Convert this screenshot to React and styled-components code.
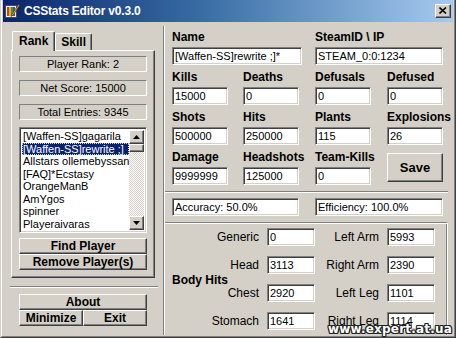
import React from 'react'
import styled, { createGlobalStyle, css } from 'styled-components'

const GlobalStyle = createGlobalStyle`
  html, body {
    margin: 0;
    padding: 0;
    background: #fff;
  }
  body {
    font-family: "Liberation Sans", Arial, sans-serif;
    font-size: 11px;
    color: #000;
  }
  * {
    box-sizing: border-box;
  }
`

// classic win2000 bevels
const raised = css`
  border: 1px solid;
  border-color: #fff #404040 #404040 #fff;
  box-shadow: inset -1px -1px #808080, inset 1px 1px #d4d0c8;
`

const sunken = css`
  border: 1px solid;
  border-color: #808080 #fff #fff #808080;
  box-shadow: inset 1px 1px #404040, inset -1px -1px #d4d0c8;
`

const Window = styled.div`
  position: relative;
  width: 456px;
  height: 338px;
  background: #d4d0c8;
  border: 1px solid;
  border-top: 0;
  border-color: #d4d0c8 #404040 #404040 #d4d0c8;
  display: flex;
  overflow: hidden;
`

const Frame = styled.div`
  flex: 1;
  display: flex;
  flex-direction: column;
  border: 1px solid;
  border-top: 0;
  border-color: #fff #808080 #808080 #fff;
  padding: 0 1px 1px 1px;
`

const TitleBar = styled.div`
  height: 22px;
  flex: none;
  display: flex;
  align-items: center;
  padding: 0 2px 1px 1px;
  background: linear-gradient(90deg, #0a246a 0%, #3a6ea5 45%, #a6caf0 100%);

  .title {
    margin-left: 4px;
    color: #fff;
    font-weight: bold;
    font-size: 12px;
    letter-spacing: -0.2px;
  }
`

const CloseButton = styled.div`
  ${raised};
  margin-left: auto;
  width: 16px;
  height: 14px;
  background: #d4d0c8;
  display: flex;
  align-items: center;
  justify-content: center;
`

const Body = styled.div`
  flex: 1;
  display: flex;
`

const LeftPane = styled.div`
  width: 160px;
  flex: none;
  padding: 9px 0 0 8px;
  display: flex;
  flex-direction: column;
`

const Divider = styled.div`
  width: 2px;
  flex: none;
  margin-top: 4px;
  border-left: 1px solid #808080;
  border-right: 1px solid #fff;
`

const TabStrip = styled.div`
  height: 19px;
  display: flex;
  align-items: flex-end;
  padding-left: 1px;
`

const Tab = styled.div`
  position: relative;
  z-index: ${p => (p.$active ? 1 : 0)};
  height: ${p => (p.$active ? '20px' : '17px')};
  margin-bottom: ${p => (p.$active ? '-1px' : '0')};
  padding: ${p => (p.$active ? '2px 6px 0 6px' : '1px 5px 0 5px')};
  background: #d4d0c8;
  border-top: 1px solid #fff;
  border-left: 1px solid #fff;
  border-right: 1px solid #404040;
  box-shadow: inset -1px 0 #808080;
  border-radius: 2px 2px 0 0;
  font-weight: bold;
  font-size: 12px;
  line-height: 14px;
`

const TabPanel = styled.div`
  width: 144px;
  height: 228px;
  ${raised};
  padding: 5px 7px 0 7px;
  display: flex;
  flex-direction: column;
`

const StatusList = styled.div`
  display: flex;
  flex-direction: column;
  gap: 8px;
`

const StatusBox = styled.div`
  height: 16px;
  border: 1px solid;
  border-color: #808080 #fff #fff #808080;
  text-align: center;
  line-height: 14px;
`

const ListBox = styled.div`
  ${sunken};
  margin-top: 7px;
  height: 106px;
  background: #fff;
  display: flex;
  padding: 2px;
`

const ListItems = styled.div`
  flex: 1;
  overflow: hidden;
  display: flex;
  flex-direction: column;
`

const ListItem = styled.div`
  height: 13px;
  line-height: 13px;
  padding-left: 1px;
  white-space: nowrap;
  overflow: hidden;
  background: ${p => (p.$selected ? '#0a246a' : 'transparent')};
  color: ${p => (p.$selected ? '#fff' : '#000')};
  outline: ${p => (p.$selected ? '1px dotted #d4d0c8' : 'none')};
  outline-offset: -1px;
`

const ScrollBar = styled.div`
  width: 15px;
  flex: none;
  display: flex;
  flex-direction: column;
  background: repeating-conic-gradient(#d4d0c8 0 25%, #fff 0 50%) 0 0 / 2px 2px;
`

const ScrollArrow = styled.div`
  ${raised};
  height: 14px;
  background: #d4d0c8;
  display: flex;
  align-items: center;
  justify-content: center;
  margin-top: ${p => (p.$bottom ? 'auto' : '0')};
`

const ScrollThumb = styled.div`
  ${raised};
  height: 8px;
  background: #d4d0c8;
`

const Button = styled.button`
  ${raised};
  display: block;
  width: ${p => p.$w || 128}px;
  height: ${p => p.$h || 16}px;
  padding: 0;
  margin: 0;
  background: #d4d0c8;
  font-family: inherit;
  font-weight: bold;
  font-size: ${p => p.$fs || 12}px;
  color: #000;
  line-height: 12px;
`

const ButtonStack = styled.div`
  margin-top: ${p => p.$mt || 0}px;
  display: flex;
  flex-direction: column;
`

const ButtonRow = styled.div`
  display: flex;
`

const HSeparator = styled.div`
  height: 2px;
  margin-top: ${p => p.$mt || 0}px;
  margin-left: ${p => p.$ml || 0}px;
  width: ${p => (p.$w ? p.$w + 'px' : 'auto')};
  border-top: 1px solid #808080;
  border-bottom: 1px solid #fff;
`

const RightPane = styled.div`
  flex: 1;
  padding-right: 5px;
  display: flex;
  flex-direction: column;
`

const FieldGrid = styled.div`
  display: grid;
  grid-template-columns: 71px 72px 72px 56px;
  row-gap: 5px;
  padding: 8px 0 0 7px;
`

const Field = styled.div`
  grid-column: ${p => p.$span || 'auto'};
  display: flex;
  flex-direction: column;
`

const Label = styled.div`
  height: 14px;
  line-height: 14px;
  margin-bottom: 3px;
  font-weight: bold;
  font-size: 12px;
  white-space: nowrap;
`

const Input = styled.input`
  ${sunken};
  width: ${p => p.$w || 56}px;
  height: 18px;
  padding: 0 2px;
  margin: 0;
  background: #fff;
  font-family: inherit;
  font-size: 11px;
  color: #000;
  outline: none;
`

const SaveCell = styled.div`
  padding-top: 3px;
`

const StatsRow = styled.div`
  display: grid;
  grid-template-columns: 143px 128px;
  padding-left: 7px;
  margin-top: 5px;
`

const BodyHits = styled.div`
  flex: 1;
  margin-top: 6px;
  border-top: 1px solid #808080;
  border-right: 1px solid #fff;
  box-shadow: inset 0 1px #fff, inset -1px 0 #808080;
  padding: 5px 0 0 7px;
`

const HitsGrid = styled.div`
  display: grid;
  grid-template-columns: 87px 48px 56px 48px;
  grid-template-rows: repeat(4, 18px);
  column-gap: 8px;
  row-gap: 10px;
`

const HitsTitle = styled.div`
  grid-column: 1;
  grid-row: 1 / span 4;
  align-self: center;
  justify-self: start;
  font-weight: bold;
  font-size: 12px;
  margin-top: 2px;
`

const HitLabel = styled.div`
  grid-column: ${p => p.$col};
  grid-row: ${p => p.$row};
  justify-self: end;
  line-height: 18px;
  font-size: 12px;
  white-space: nowrap;
`

const HitInput = styled(Input)`
  grid-column: ${p => p.$col};
  grid-row: ${p => p.$row};
`

const Watermark = styled.div`
  position: absolute;
  right: 3px;
  bottom: 1px;
  font-family: "DejaVu Sans", sans-serif;
  font-weight: bold;
  font-size: 12px;
  letter-spacing: 0.2px;
  color: #fff;
  text-shadow: 1px 0 #222, -1px 0 #222, 0 1px #222, 0 -1px #222,
    1px 1px #222, -1px -1px #222, 1px -1px #222, -1px 1px #222;
`

const players = [
  '[Waffen-SS]gagarila',
  '[Waffen-SS]rewrite ;]',
  'Allstars ollemebyssan',
  '[FAQ]*Ecstasy',
  'OrangeManB',
  'AmYgos',
  'spinner',
  'Playeraivaras',
]

const stats = [
  { label: 'Kills', value: '15000' },
  { label: 'Deaths', value: '0' },
  { label: 'Defusals', value: '0' },
  { label: 'Defused', value: '0' },
  { label: 'Shots', value: '500000' },
  { label: 'Hits', value: '250000' },
  { label: 'Plants', value: '115' },
  { label: 'Explosions', value: '26' },
  { label: 'Damage', value: '9999999' },
  { label: 'Headshots', value: '125000' },
  { label: 'Team-Kills', value: '0' },
]

const hits = [
  ['Generic', '0', 'Left Arm', '5993'],
  ['Head', '3113', 'Right Arm', '2390'],
  ['Chest', '2920', 'Left Leg', '1101'],
  ['Stomach', '1641', 'Right Leg', '1114'],
]

const AppIcon = () => (
  <svg width="16" height="16" viewBox="0 0 16 16">
    <rect x="1.5" y="2.5" width="11" height="12" fill="#f2efe6" stroke="#4a4a4a" />
    <rect x="3" y="4" width="2" height="9" fill="#d23c2c" />
    <rect x="5" y="4" width="2" height="9" fill="#e8b020" />
    <rect x="7" y="4" width="2" height="9" fill="#3a9a3a" />
    <rect x="9" y="4" width="2" height="9" fill="#3256c8" />
    <path d="M14.5 1.5 L8 11 L7 13.5 L9.2 12 L15.5 2.5 Z" fill="#f0a030" stroke="#5a3a10" strokeWidth="0.7" />
  </svg>
)

const CloseIcon = () => (
  <svg width="8" height="7" viewBox="0 0 8 7">
    <path d="M0.5 0.5 L7 6.5 M7 0.5 L0.5 6.5" stroke="#000" strokeWidth="1.6" />
  </svg>
)

const Arrow = ({ down }) => (
  <svg width="7" height="4" viewBox="0 0 7 4">
    <path d={down ? 'M0 0 H7 L3.5 4 Z' : 'M0 4 H7 L3.5 0 Z'} fill="#000" />
  </svg>
)

export default function App() {
  return (
    <>
      <GlobalStyle />
      <Window>
        <Frame>
          <TitleBar>
            <AppIcon />
            <span className="title">CSStats Editor v0.3.0</span>
            <CloseButton>
              <CloseIcon />
            </CloseButton>
          </TitleBar>

          <Body>
            <LeftPane>
              <TabStrip>
                <Tab $active>Rank</Tab>
                <Tab>Skill</Tab>
              </TabStrip>
              <TabPanel>
                <StatusList>
                  <StatusBox>Player Rank: 2</StatusBox>
                  <StatusBox>Net Score: 15000</StatusBox>
                  <StatusBox>Total Entries: 9345</StatusBox>
                </StatusList>
                <ListBox>
                  <ListItems>
                    {players.map((name, i) => (
                      <ListItem key={i} $selected={i === 1}>
                        {name}
                      </ListItem>
                    ))}
                  </ListItems>
                  <ScrollBar>
                    <ScrollArrow>
                      <Arrow />
                    </ScrollArrow>
                    <ScrollThumb />
                    <ScrollArrow $bottom>
                      <Arrow down />
                    </ScrollArrow>
                  </ScrollBar>
                </ListBox>
                <ButtonStack $mt={5}>
                  <Button>Find Player</Button>
                  <Button>Remove Player(s)</Button>
                </ButtonStack>
              </TabPanel>
              <HSeparator $mt={8} $ml={-1} $w={148} />
              <ButtonStack $mt={6} style={{ marginLeft: 8 }}>
                <Button>About</Button>
                <ButtonRow>
                  <Button $w={64}>Minimize</Button>
                  <Button $w={64}>Exit</Button>
                </ButtonRow>
              </ButtonStack>
            </LeftPane>

            <Divider />

            <RightPane>
              <FieldGrid>
                <Field $span="span 2">
                  <Label>Name</Label>
                  <Input $w={130} defaultValue="[Waffen-SS]rewrite ;]*" />
                </Field>
                <Field $span="span 2">
                  <Label>SteamID \ IP</Label>
                  <Input $w={128} defaultValue="STEAM_0:0:1234" />
                </Field>
                {stats.map(s => (
                  <Field key={s.label}>
                    <Label>{s.label}</Label>
                    <Input defaultValue={s.value} />
                  </Field>
                ))}
                <SaveCell>
                  <Button $w={56} $h={29} $fs={13}>Save</Button>
                </SaveCell>
              </FieldGrid>

              <HSeparator $mt={6} />
              <StatsRow>
                <Input $w={127} readOnly defaultValue="Accuracy: 50.0%" />
                <Input $w={128} readOnly defaultValue="Efficiency: 100.0%" />
              </StatsRow>

              <BodyHits>
                <HitsGrid>
                  <HitsTitle>Body Hits</HitsTitle>
                  {hits.map((row, i) => (
                    <React.Fragment key={row[0]}>
                      <HitLabel $col={1} $row={i + 1}>{row[0]}</HitLabel>
                      <HitInput $w={48} $col={2} $row={i + 1} defaultValue={row[1]} />
                      <HitLabel $col={3} $row={i + 1}>{row[2]}</HitLabel>
                      <HitInput $w={48} $col={4} $row={i + 1} defaultValue={row[3]} />
                    </React.Fragment>
                  ))}
                </HitsGrid>
              </BodyHits>
            </RightPane>
          </Body>
        </Frame>
        <Watermark>www.expert.at.ua</Watermark>
      </Window>
    </>
  )
}
